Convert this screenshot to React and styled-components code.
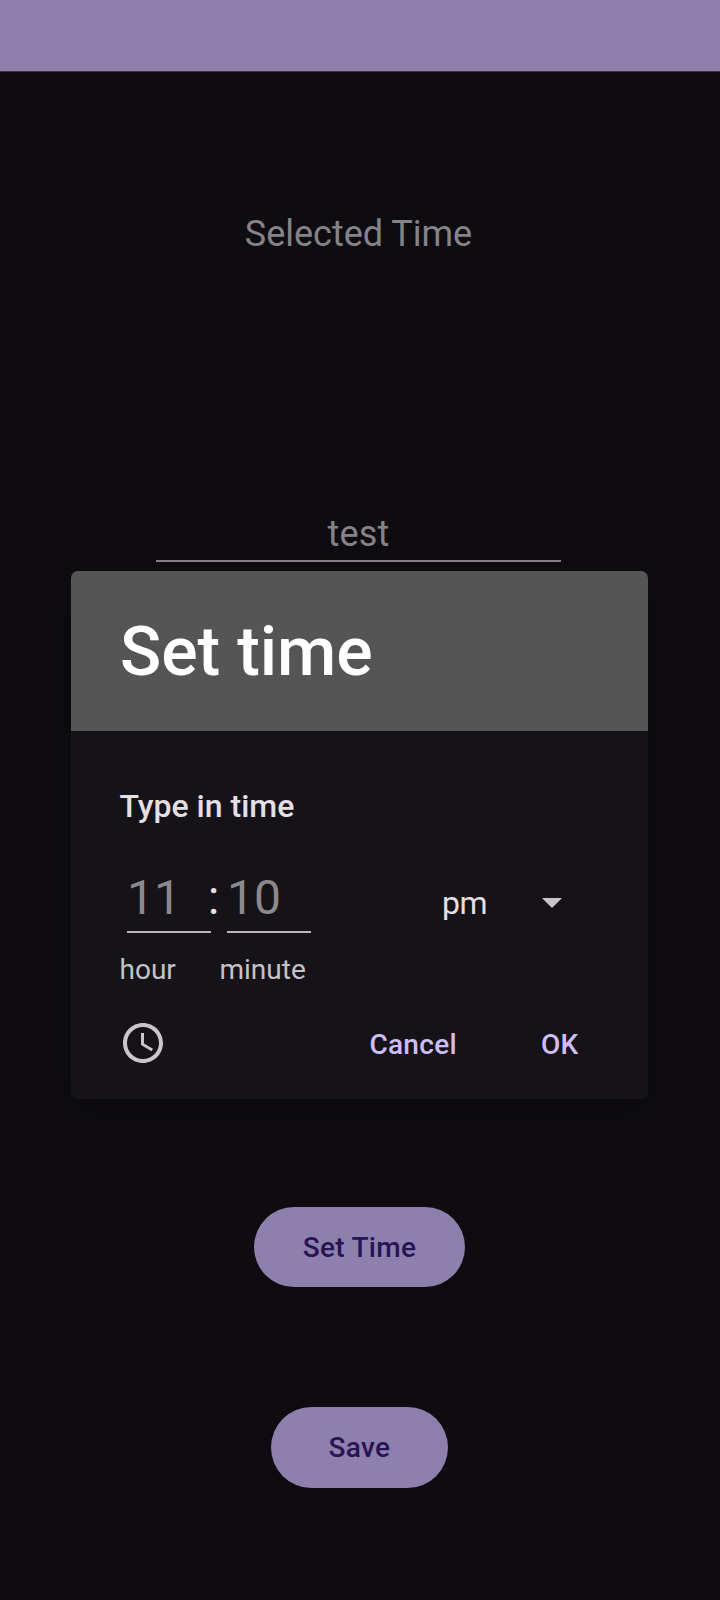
import React, { useState } from "react";
import styled, { createGlobalStyle } from "styled-components";

const GlobalStyle = createGlobalStyle`
  * { box-sizing: border-box; }
  body { margin: 0; background: #0e0c10; font-family: Roboto, "Liberation Sans", sans-serif; }
  button, input { font-family: inherit; border: 0; padding: 0; margin: 0; background: none; outline: none; }
`;

const Screen = styled.main`
  position: relative;
  width: 720px;
  height: 1600px;
  overflow: hidden;
  display: flex;
  flex-direction: column;
  background: #0e0c10;
`;

const StatusBar = styled.div`
  height: 72px;
  flex: none;
  background: #8e80ad;
  border-bottom: 1px solid #3a3249;
`;

const Content = styled.div`
  display: flex;
  flex-direction: column;
  align-items: center;
  padding-right: 3px;
`;

const SelectedTime = styled.div`
  margin-top: 141px;
  height: 42px;
  font-size: 36px;
  line-height: 42px;
  color: #858387;
`;

const NameInput = styled.input`
  margin-top: 257px;
  width: 405px;
  height: 50px;
  padding-bottom: 4px;
  text-align: center;
  font-size: 36px;
  letter-spacing: 0.2px;
  color: #858387;
  border-bottom: 2px solid #858387;
`;

const Actions = styled.div`
  display: flex;
  flex-direction: column;
  align-items: center;
  gap: 120px;
  margin: 644.5px -1px 0 0;
`;

const PillButton = styled.button`
  width: ${(p) => p.$width}px;
  height: 80.5px;
  padding: 1px 0 0 1px;
  border-radius: 41px;
  background: #8e80ad;
  color: #281454;
  font-size: 28px;
  font-weight: 500;
  line-height: 80px;
  letter-spacing: 0.3px;
`;

const Overlay = styled.div`
  position: absolute;
  inset: 0;
  padding: 571px 72px 0 71px;
`;

const Dialog = styled.section`
  height: 528px;
  border-radius: 7px;
  overflow: hidden;
  display: flex;
  flex-direction: column;
  background: #151317;
  box-shadow: 0 12px 36px rgba(0, 0, 0, 0.22);
`;

const DialogHeader = styled.header`
  height: 160px;
  flex: none;
  padding: 41px 49px 0;
  background: #555555;
`;

const Title = styled.h1`
  margin: 0;
  font-size: 68px;
  line-height: 80px;
  font-weight: 500;
  color: #fff;
`;

const DialogBody = styled.div`
  flex: 1;
  display: flex;
  flex-direction: column;
  padding: 56px 49px 0 48px;
`;

const Subtitle = styled.h2`
  margin: 0;
  padding-left: 0.5px;
  font-size: 32px;
  line-height: 38px;
  font-weight: 500;
  color: #e4dfe5;
`;

const TimeRow = styled.div`
  display: flex;
  align-items: flex-start;
  margin-top: 40px;
`;

const Field = styled.label`
  display: flex;
  flex-direction: column;
  width: ${(p) => p.$width}px;
`;

const FieldInput = styled.input`
  width: 84px;
  height: 68px;
  margin-left: 8px;
  padding: 0 0 2px;
  font-size: 48px;
  line-height: 64px;
  color: #8d888e;
  border-bottom: 2px solid #bab5bb;
`;

const FieldLabel = styled.span`
  margin-top: 20px;
  padding-left: 0.5px;
  font-size: 28px;
  line-height: 34px;
  color: #c7c1c8;
`;

const Colon = styled.span`
  display: flex;
  justify-content: center;
  width: 11px;
  padding-top: 1px;
  font-size: 48px;
  line-height: 64px;
  color: #e4dfe5;
`;

const PeriodSelect = styled.button`
  display: flex;
  align-items: center;
  justify-content: space-between;
  width: 120px;
  height: 38px;
  margin: 19px 37px 0 auto;
  font-size: 32px;
  line-height: 38px;
  letter-spacing: -0.5px;
  color: #e4dfe5;
`;

const Footer = styled.footer`
  display: flex;
  align-items: center;
  margin-top: 32px;
  height: 48px;
`;

const IconButton = styled.button`
  display: flex;
`;

const TextButton = styled.button`
  margin: 4px ${(p) => p.$end || 0}px 0 ${(p) => p.$gap};
  font-size: 28px;
  font-weight: 500;
  line-height: 34px;
  letter-spacing: 0.3px;
  color: #cdbdf8;
`;

const ClockIcon = () => (
  <svg width="48" height="48" viewBox="0 0 24 24" fill="#cac4cc">
    <path d="M11.99 2C6.47 2 2 6.48 2 12s4.47 10 9.99 10C17.52 22 22 17.52 22 12S17.52 2 11.99 2zM12 20c-4.42 0-8-3.58-8-8s3.58-8 8-8 8 3.58 8 8-3.58 8-8 8zm.5-13H11v6l5.25 3.15.75-1.23-4.5-2.67z" />
  </svg>
);

const DropArrow = () => (
  <svg width="20" height="10" viewBox="0 0 20 10">
    <path d="M0 0L10 10L20 0Z" fill="#cac4cc" />
  </svg>
);

export default function App() {
  const [name, setName] = useState("test");
  const [hour, setHour] = useState("11");
  const [minute, setMinute] = useState("10");
  return (
    <Screen>
      <GlobalStyle />
      <StatusBar />
      <Content>
        <SelectedTime>Selected Time</SelectedTime>
        <NameInput value={name} onChange={(e) => setName(e.target.value)} />
        <Actions>
          <PillButton $width={211}>Set Time</PillButton>
          <PillButton $width={177}>Save</PillButton>
        </Actions>
      </Content>
      <Overlay>
        <Dialog role="dialog">
          <DialogHeader>
            <Title>Set time</Title>
          </DialogHeader>
          <DialogBody>
            <Subtitle>Type in time</Subtitle>
            <TimeRow>
              <Field $width={89}>
                <FieldInput value={hour} onChange={(e) => setHour(e.target.value)} />
                <FieldLabel>hour</FieldLabel>
              </Field>
              <Colon>:</Colon>
              <Field $width={100}>
                <FieldInput value={minute} onChange={(e) => setMinute(e.target.value)} />
                <FieldLabel>minute</FieldLabel>
              </Field>
              <PeriodSelect>
                pm
                <DropArrow />
              </PeriodSelect>
            </TimeRow>
            <Footer>
              <IconButton aria-label="Clock">
                <ClockIcon />
              </IconButton>
              <TextButton $gap="auto">Cancel</TextButton>
              <TextButton $gap="84px" $end={20.5}>OK</TextButton>
            </Footer>
          </DialogBody>
        </Dialog>
      </Overlay>
    </Screen>
  );
}
